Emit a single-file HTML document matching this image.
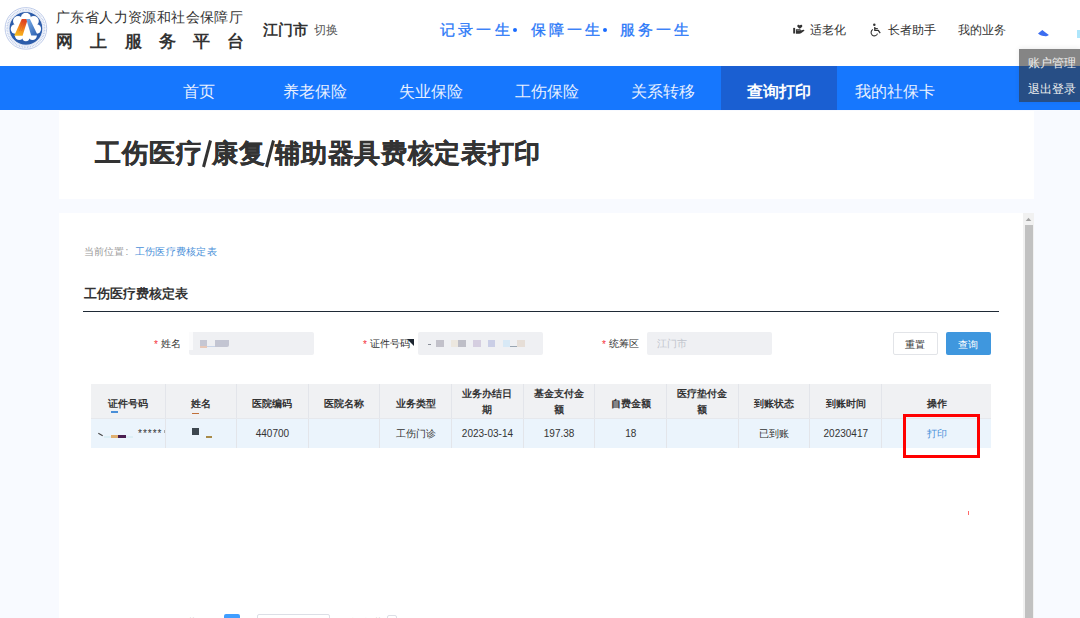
<!DOCTYPE html>
<html><head><meta charset="utf-8">
<style>
*{margin:0;padding:0;box-sizing:border-box}
html,body{width:1080px;height:618px;overflow:hidden;background:#f8faff;font-family:"Liberation Sans",sans-serif;color:#333}
.abs{position:absolute}
#hdr{position:absolute;left:0;top:0;width:1080px;height:66px;background:#fff}
#nav{position:absolute;left:0;top:66px;width:1080px;height:44px;background:#1677fe}
#nav ul{position:absolute;left:141px;top:0;list-style:none;display:flex}
#nav li{width:116px;height:44px;line-height:51px;text-align:center;font-size:16px;color:#e8f0ff}
#nav li.on{background:#1a5fd2;color:#fff;font-weight:bold}
.t1{left:56px;top:9px;font-size:14px;letter-spacing:0.4px;color:#333;white-space:nowrap}
.t2{left:56px;top:29.5px;font-size:17px;font-weight:bold;color:#333;letter-spacing:17.3px;white-space:nowrap}
.city{left:262.5px;top:21px;font-size:14.5px;font-weight:bold;color:#333}
.sw{left:314px;top:22px;font-size:12px;color:#555}
.slogan{top:21px;font-size:15px;color:#2a78f8;letter-spacing:3.2px;white-space:nowrap;-webkit-text-stroke:0.3px #2a78f8}
.sdot{top:28px;width:4px;height:4px;border-radius:2px;background:#1a6cff}
.rt{top:22px;font-size:12px;color:#333;white-space:nowrap}
#dd{position:absolute;left:1019px;top:49px;width:61px;height:53px;background:rgba(51,51,51,0.6);box-shadow:0 -1px 5px rgba(0,0,0,0.08)}
#dd div{position:absolute;left:9px;font-size:12px;color:#eee;white-space:nowrap}
.card{position:absolute;background:#fff}
.title{top:135.5px;font-size:25.5px;letter-spacing:1px;font-weight:bold;color:#333;white-space:nowrap;-webkit-text-stroke:0.35px #333}
.bc{left:84px;top:245px;font-size:10px;color:#999;white-space:nowrap}
.bc span{color:#4a90d9;margin-left:6.5px;font-size:10.2px;letter-spacing:0.25px}
.sec{left:84px;top:285px;font-size:13px;font-weight:bold;color:#333;white-space:nowrap}
.uline{left:83px;top:310.8px;width:915.5px;height:1.6px;background:#1f2a36}
.lab{top:337px;font-size:10px;color:#333;white-space:nowrap}
.lab i{font-style:normal;color:#f5303a;margin-right:3px;position:relative;top:0.5px}
.inp{top:331.5px;width:125px;height:23px;background:#eff0f3;border-radius:2px}
.btn{top:331.5px;height:23px;border-radius:2px;font-size:10px;text-align:center;line-height:25px}
table{position:absolute;left:91px;top:384px;table-layout:fixed;width:900px;border-collapse:collapse;font-size:10px;color:#333}
td,th{border-left:1px solid #e3e5ea;text-align:center;padding:0}
td:first-child,th:first-child{border-left:none}
th{border-bottom:1px solid #e6e8ec}
th{background:#f0f1f3;font-weight:bold;height:34.4px;line-height:16px;color:#333;padding-top:2px}
.s1{position:relative;top:1.5px}
tr.r td{background:#ebf4fc;height:29.4px;padding-top:1px}
#sbt{position:absolute;left:1023px;top:213px;width:11px;height:405px;background:#f1f1f1}
#sb{position:absolute;left:1025px;top:224.5px;width:7.8px;height:394px;background:#c1c1c1}
</style></head><body>
<div id="hdr"></div>
<svg class="abs" style="left:0;top:0" width="52" height="56" viewBox="0 0 52 56">
  <defs>
    <linearGradient id="og" x1="0" y1="1" x2="0.4" y2="0"><stop offset="0" stop-color="#f9c21a"/><stop offset="0.55" stop-color="#f28a1c"/><stop offset="1" stop-color="#e2471f"/></linearGradient>
    <linearGradient id="bg" x1="0" y1="0" x2="1" y2="1"><stop offset="0" stop-color="#7fb2ea"/><stop offset="1" stop-color="#2b5fb0"/></linearGradient>
  </defs>
  <circle cx="25.9" cy="28.4" r="20.8" fill="#fff" stroke="#b7c5e6" stroke-width="0.9"/>
  <circle cx="25.9" cy="28.4" r="18.7" fill="none" stroke="#6f8fd0" stroke-width="1.8" stroke-dasharray="0.9 0.7" opacity="0.45"/>
  <circle cx="25.9" cy="28.4" r="17.1" fill="none" stroke="#b9c7e8" stroke-width="0.5"/>
  <circle cx="25.9" cy="28.4" r="16.4" fill="#2c5caa"/>
  <g fill="#fff">
    <circle cx="25.9" cy="28.2" r="9.8"/>
    <circle cx="25.9" cy="17.8" r="5"/>
    <circle cx="18" cy="21" r="5"/>
    <circle cx="33.8" cy="21" r="5"/>
    <circle cx="15.5" cy="29" r="4.8"/>
    <circle cx="36.3" cy="29" r="4.8"/>
    <circle cx="19.3" cy="35.6" r="4.4"/>
    <circle cx="32.5" cy="35.6" r="4.4"/>
    <circle cx="25.9" cy="37.6" r="3.6"/>
  </g>
  <path d="M14.2 35.8 L21.8 19 L27.8 19 L22.6 35.8 Z" fill="url(#og)"/>
  <path d="M26.2 19 L29.9 19 L37.8 35.4 L31.2 35.4 Z" fill="url(#bg)"/>
  <path d="M23.5 19.5 L19.5 31 M25.5 19.5 L21.5 31" stroke="#d9402a" stroke-width="0.6" opacity="0.6"/>
</svg>
<div class="abs t1">广东省人力资源和社会保障厅</div>
<div class="abs t2">网上服务平台</div>
<div class="abs city">江门市</div>
<div class="abs sw">切换</div>
<div class="abs slogan" style="left:440px">记录一生</div><div class="abs sdot" style="left:513px"></div><div class="abs slogan" style="left:530.5px">保障一生</div><div class="abs sdot" style="left:602.5px"></div><div class="abs slogan" style="left:619.5px">服务一生</div>
<div class="abs rt" style="left:810px">适老化</div>
<div class="abs rt" style="left:888px">长者助手</div>
<div class="abs rt" style="left:958px">我的业务</div>

<svg class="abs" style="left:792px;top:24px" width="13" height="11" viewBox="0 0 13 11">
  <path d="M7.8 4.7 C6.2 3.6 5.3 2.8 5.3 1.9 C5.3 1.2 5.9 0.8 6.5 0.8 C7.1 0.8 7.5 1.1 7.8 1.5 C8.1 1.1 8.5 0.8 9.1 0.8 C9.7 0.8 10.3 1.2 10.3 1.9 C10.3 2.8 9.4 3.6 7.8 4.7Z" fill="#333"/>
  <rect x="1.2" y="3.9" width="1.9" height="5.6" fill="#333"/>
  <path d="M3.9 5.2 L8 5.2 C8.8 5.2 9 6 8.6 6.5 L11.5 5.8 C12.4 5.6 12.7 6.6 12 7.1 L9 9.2 C8.5 9.5 8 9.7 7.3 9.7 L3.9 9.7 Z" fill="#333"/>
  <path d="M4.8 6.6 L8 6.6" stroke="#fff" stroke-width="0.5" opacity="0.6"/>
</svg>
<svg class="abs" style="left:869px;top:22px" width="13" height="15" viewBox="0 0 13 15">
  <circle cx="5.3" cy="2.7" r="1.25" fill="#333"/>
  <path d="M5.8 5 L5.8 8.4 L9.3 8.4 L11.2 11.1" stroke="#333" stroke-width="1.3" fill="none" stroke-linejoin="round"/>
  <path d="M5.8 6.6 L8.8 6.6" stroke="#333" stroke-width="1.1"/>
  <path d="M3.9 7.6 A3.3 3.3 0 1 0 8.5 11.6" stroke="#333" stroke-width="1.1" fill="none"/>
</svg>
<svg class="abs" style="left:1037px;top:29px" width="13" height="8" viewBox="0 0 13 8">
  <path d="M1 4.4 L5.3 1 L8.5 3.6 L11.9 5.9 C10.5 7.2 8.3 7.3 6.8 7.1 C4.6 6.8 2.6 5.9 1 4.4 Z" fill="#3c6df0"/>
</svg>
<div class="abs" style="left:1077px;top:30px;width:3px;height:7.5px;background:#aee6fb"></div>
<div id="nav"><ul>
<li>首页</li><li>养老保险</li><li>失业保险</li><li>工伤保险</li><li>关系转移</li><li class="on">查询打印</li><li>我的社保卡</li>
</ul></div>
<div id="dd"><div style="top:6px">账户管理</div><div style="top:32px">退出登录</div></div>

<div class="card" style="left:59px;top:110.5px;width:975px;height:88px"></div>
<div class="abs title" style="left:95px">工伤医疗</div>
<svg class="abs" style="left:200px;top:139px" width="13" height="29" viewBox="0 0 13 29"><path d="M3.5 28 L10.5 1.5" stroke="#333" stroke-width="3" fill="none"/></svg>
<div class="abs title" style="left:211.5px">康复</div>
<svg class="abs" style="left:262.5px;top:139px" width="13" height="29" viewBox="0 0 13 29"><path d="M3.5 28 L10.5 1.5" stroke="#333" stroke-width="3" fill="none"/></svg>
<div class="abs title" style="left:274.5px;letter-spacing:0.65px">辅助器具费核定表打印</div>
<div class="card" style="left:59px;top:213px;width:975px;height:405px"></div>
<div id="sbt"></div><div id="sb"></div><svg class="abs" style="left:1025px;top:217px" width="7" height="4.5" viewBox="0 0 7 4.5"><path d="M0.7 4 L3.5 0.7 L6.3 4z" fill="#a3a3a3"/></svg>
<div class="abs bc">当前位置<b style="font-weight:normal;margin-left:1.5px">:</b><span>工伤医疗费核定表</span></div>
<div class="abs sec">工伤医疗费核定表</div>
<div class="abs uline"></div>

<div class="abs lab" style="left:154px"><i>*</i>姓名</div>
<div class="abs inp" style="left:188.5px"></div>
<div class="abs lab" style="left:363px"><i>*</i>证件号码</div>
<div class="abs inp" style="left:417.5px"></div>
<div class="abs lab" style="left:602px"><i>*</i>统筹区</div>
<div class="abs inp" style="left:646.5px;color:#c0c4cc;font-size:10px;line-height:23px;padding-left:10px">江门市</div>
<div class="abs btn" style="left:892.5px;width:45.5px;border:1px solid #e2e4e8;background:#fff;color:#333;line-height:23px">重置</div>
<div class="abs btn" style="left:945.5px;width:45.5px;background:#3f97de;color:#fff">查询</div>

<table>
<colgroup><col style="width:74.5px"><col style="width:71.1px"><col style="width:71.6px"><col style="width:71.7px"><col style="width:71.7px"><col style="width:71.6px"><col style="width:71.7px"><col style="width:71.7px"><col style="width:71.6px"><col style="width:71.7px"><col style="width:71.7px"><col style="width:109.3px"></colgroup>
<tr><th><span class="s1">证件号码</span></th><th><span class="s1">姓名</span></th><th><span class="s1">医院编码</span></th><th><span class="s1">医院名称</span></th><th><span class="s1">业务类型</span></th><th>业务办结日<br>期</th><th>基金支付金<br>额</th><th><span class="s1">自费金额</span></th><th>医疗垫付金<br>额</th><th><span class="s1">到账状态</span></th><th><span class="s1">到账时间</span></th><th><span class="s1">操作</span></th></tr>
<tr class="r"><td></td><td></td><td>440700</td><td></td><td>工伤门诊</td><td>2023-03-14</td><td>197.38</td><td>18</td><td></td><td>已到账</td><td>20230417</td><td style="color:#4a90d9">打印</td></tr>
</table>
<div class="abs" style="left:902.8px;top:413.7px;width:77.2px;height:44.7px;border:3.6px solid #ff0000"></div>

<!-- censor blobs -->
<div class="abs" style="left:200px;top:340px;width:7px;height:7px;background:#c6c7d3"></div>
<div class="abs" style="left:200px;top:346px;width:7px;height:2px;background:#e8c8b8"></div>
<div class="abs" style="left:207px;top:346px;width:20px;height:1px;background:#c8d4e8"></div>
<div class="abs" style="left:215px;top:340px;width:14px;height:6.5px;background:#c3c5d2;border-radius:0 0 2px 0"></div>
<div class="abs" style="left:188.5px;top:331.5px;width:4px;height:18.5px;background:#fbfbfc"></div>
<div class="abs" style="left:436px;top:339.5px;width:7.5px;height:7.5px;background:#c2c1ca"></div>
<div class="abs" style="left:450.5px;top:339.5px;width:7.5px;height:7.5px;background:#ece7df"></div>
<div class="abs" style="left:458px;top:339.5px;width:7.5px;height:7.5px;background:#bebec7"></div>
<div class="abs" style="left:473px;top:339.5px;width:7.5px;height:7.5px;background:#d5cee0"></div>
<div class="abs" style="left:487.5px;top:339.5px;width:7.5px;height:7.5px;background:#cacee6"></div>
<div class="abs" style="left:502.5px;top:339.5px;width:7.5px;height:7.5px;background:#d8e9f6"></div>
<div class="abs" style="left:510px;top:346px;width:7px;height:1px;background:#9aa6b2"></div>
<div class="abs" style="left:517px;top:339.5px;width:7.5px;height:7.5px;background:#e6ded7"></div>
<div class="abs" style="left:428px;top:344px;width:3px;height:1px;background:#8a8f99"></div>
<svg class="abs" style="left:407px;top:338.5px" width="7" height="7" viewBox="0 0 7 7"><path d="M0 0 H7 V7z" fill="#1d2530"/></svg>
<!-- table blobs -->
<div class="abs" style="left:110.5px;top:411px;width:7.5px;height:2.2px;background:#4a8fd8"></div>
<div class="abs" style="left:192px;top:412.7px;width:7px;height:1px;background:#c0703a"></div>
<div class="abs" style="left:98px;top:433.5px;width:5px;height:1px;background:#444;transform:rotate(30deg)"></div>
<div class="abs" style="left:104px;top:435.5px;width:29px;height:2.5px;background:#dbeef5"></div>
<div class="abs" style="left:110.7px;top:435.2px;width:7.5px;height:3.3px;background:#e0b070"></div>
<div class="abs" style="left:118px;top:435.2px;width:7.7px;height:3.3px;background:#4a1e50"></div>
<div class="abs" style="left:138px;top:428.5px;font-size:10px;letter-spacing:1px;color:#333;line-height:10px">*****</div>
<div class="abs" style="left:163.5px;top:429.5px;width:0.8px;height:3px;background:#aaa"></div>
<div class="abs" style="left:192px;top:428.3px;width:7px;height:7px;background:#3d474f"></div>
<div class="abs" style="left:206.3px;top:435.5px;width:6px;height:2.5px;background:#a88a48"></div>

<!-- pagination (cut off) -->
<div class="abs" style="left:187px;top:615.5px;font-size:10px;color:#666;white-space:nowrap">共 1 条</div>
<div class="abs" style="left:224.4px;top:614px;width:15.6px;height:20px;background:#409eff;border-radius:2px"></div>
<div class="abs" style="left:257.3px;top:614px;width:73px;height:20px;background:#fff;border:1px solid #dcdfe6;border-radius:2px"></div>
<div class="abs" style="left:282px;top:616px;font-size:10px;color:#666;white-space:nowrap">10条/页</div>
<div class="abs" style="left:350px;top:615.5px;font-size:10px;color:#666;white-space:nowrap">前往 共</div>
<div class="abs" style="left:386.7px;top:614.7px;width:10.4px;height:20px;background:#fff;border:1px solid #dcdfe6;border-radius:2px"></div>
<!-- red mark -->
<div class="abs" style="left:967.6px;top:511px;width:1.2px;height:4px;background:#ff6a6a"></div>
</body></html>
